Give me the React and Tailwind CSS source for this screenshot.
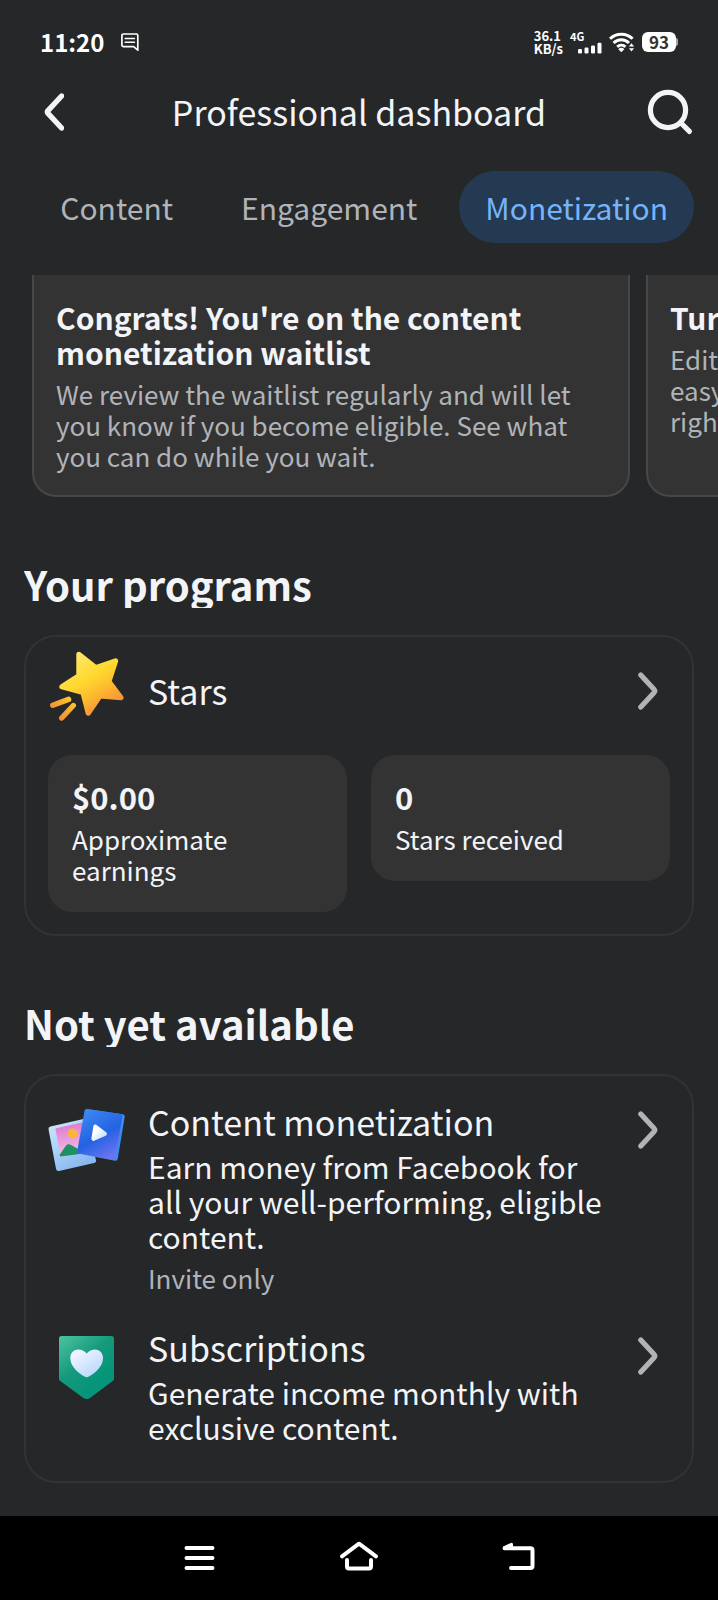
import React from 'react';

function MessageIcon() {
  return (
    <svg aria-hidden="true" className="size-5" viewBox="0 0 20 20" fill="none" stroke="#fff" strokeLinecap="round" strokeLinejoin="round">
      <path strokeWidth="1.7" d="M3.5 2h12.7c.9 0 1.6.7 1.6 1.6v14.6l-4.2-3.6H3.5c-.9 0-1.6-.7-1.6-1.6v-9.4C1.9 2.7 2.6 2 3.500 2z" />
      <path strokeWidth="1.6" d="M5.200 6.500h9.200M5.200 10.200h9.200" />
    </svg>
  );
}

function SignalIcon() {
  return (
    <svg aria-hidden="true" className="h-3 w-6" viewBox="0 0 24 12" fill="#fff">
      <rect x="0" y="7" width="4" height="4.500" rx="1.200" />
      <rect x="6.500" y="5.500" width="4" height="6" rx="1.200" />
      <rect x="13" y="3.500" width="4" height="8" rx="1.200" />
      <rect x="19.500" y="0.800" width="4" height="10.700" rx="1.200" />
    </svg>
  );
}

function WifiIcon() {
  return (
    <svg aria-hidden="true" className="h-5 w-[26px]" viewBox="0 0 26 20" fill="none" stroke="#fff" strokeWidth="3">
      <path d="M1 6.800a16 16 0 0 1 22.600 0" />
      <path d="M4.600 11a11 11 0 0 1 15.400 0" />
      <path d="M8.200 14.900a6 6 0 0 1 8.200 0" />
      <path fill="#fff" stroke="none" d="M9.300 17.200a4 4 0 0 1 6 0l-3 3z" />
      <path fill="#fff" stroke="none" d="M22.500 11.300l2.600 3.300h-5.200zM22.500 19.500l-2.600-3.300h5.200z" />
    </svg>
  );
}

function ChevronRight() {
  return (
    <svg aria-hidden="true" className="h-[38px] w-5 shrink-0" viewBox="0 0 20 38" fill="none" stroke="#b0b3b8" strokeWidth="5.200" strokeLinecap="round" strokeLinejoin="round">
      <path d="M2.800 3L16.200 17.600q1.200 1.400 0 2.800L2.800 35" />
    </svg>
  );
}

function StarIcon() {
  return (
    <svg aria-hidden="true" className="size-20 shrink-0" viewBox="0 0 80 80">
      <defs>
        <linearGradient id="star" x1="0.200" y1="0" x2="0.800" y2="1">
          <stop offset="0" stopColor="#ffe56b" />
          <stop offset="0.400" stopColor="#ffd930" />
          <stop offset="0.650" stopColor="#fdbb2d" />
          <stop offset="1" stopColor="#f5853f" />
        </linearGradient>
        <linearGradient id="trail" gradientUnits="userSpaceOnUse" x1="25" y1="48" x2="8" y2="66">
          <stop offset="0" stopColor="#ffca28" />
          <stop offset="1" stopColor="#f08838" />
        </linearGradient>
      </defs>
      <path
        d="M31 3.500L47.800 16.800L67.500 10L60.800 30.500L72.800 46.500L52 44.800L40.300 62L35 41.300L14 35.700L31 24.700z"
        fill="url(#star)" stroke="url(#star)" strokeWidth="5.400" strokeLinejoin="round"
      />
      <path d="M4.800 54.300L20.600 48.400M13.700 67L25.300 54.500" stroke="url(#trail)" strokeWidth="5.400" strokeLinecap="round" />
    </svg>
  );
}

function MediaIcon() {
  return (
    <svg aria-hidden="true" className="size-20 shrink-0" viewBox="0 0 80 80">
      <defs>
        <linearGradient id="frame" x1="0" y1="0" x2="0.600" y2="1">
          <stop offset="0" stopColor="#cfe6f8" />
          <stop offset="0.500" stopColor="#a9d2fa" />
          <stop offset="1" stopColor="#8ab8ef" />
        </linearGradient>
        <linearGradient id="sky" x1="0.300" y1="0" x2="0.500" y2="1">
          <stop offset="0" stopColor="#e07ad0" />
          <stop offset="1" stopColor="#f3c3e6" />
        </linearGradient>
        <linearGradient id="video" x1="0.200" y1="0" x2="0.700" y2="1">
          <stop offset="0" stopColor="#3b86f0" />
          <stop offset="0.550" stopColor="#2462e2" />
          <stop offset="1" stopColor="#6b74f0" />
        </linearGradient>
        <linearGradient id="play" x1="0" y1="0" x2="1" y2="1">
          <stop offset="0.300" stopColor="#fff" />
          <stop offset="1" stopColor="#bcdcfb" />
        </linearGradient>
      </defs>
      <path d="M3 26L36 18.500L45.500 57.500L10.500 65.500z" fill="url(#frame)" stroke="url(#frame)" strokeWidth="5" strokeLinejoin="round" />
      <path d="M8.500 26.200L34 20.500L41 47L13.500 53.200z" fill="url(#sky)" stroke="url(#sky)" strokeWidth="2" strokeLinejoin="round" />
      <circle cx="24.600" cy="30.500" r="5" fill="#fbb63a" />
      <path d="M13.200 52L19.300 43.400q1-1.200 2.600-.3L33 49.200z" fill="#1d9163" stroke="#1d9163" strokeWidth="3" strokeLinejoin="round" />
      <path d="M40 8.500L74.500 13.500L67.500 55.500L34 49z" fill="#3f8cf0" stroke="#3f8cf0" strokeWidth="4.500" strokeLinejoin="round" />
      <path d="M38.500 8L72.500 13L65 54.800L31.200 48.300z" fill="url(#video)" stroke="url(#video)" strokeWidth="4" strokeLinejoin="round" />
      <path d="M47.300 23.500L57 30.800L45.400 35.800z" fill="url(#play)" stroke="url(#play)" strokeWidth="4" strokeLinejoin="round" />
    </svg>
  );
}

function SubscriptionIcon() {
  return (
    <svg aria-hidden="true" className="size-20 shrink-0" viewBox="0 0 80 80">
      <defs>
        <linearGradient id="badge" x1="0" y1="0" x2="0.600" y2="0.800">
          <stop offset="0" stopColor="#4cc3a2" />
          <stop offset="0.600" stopColor="#15997b" />
          <stop offset="1" stopColor="#06957a" />
        </linearGradient>
        <linearGradient id="heart" x1="0" y1="0" x2="0.800" y2="1">
          <stop offset="0.200" stopColor="#eef3ff" />
          <stop offset="1" stopColor="#b4d6fa" />
        </linearGradient>
      </defs>
      <path d="M13.500 7h50a2.500 2.500 0 0 1 2.500 2.500V49.500q0 1.600-1.300 2.600L42 69q-3.300 2.200-6.600 0L12.300 52.100q-1.300-1-1.300-2.600V9.500A2.500 2.500 0 0 1 13.500 7z" fill="url(#badge)" />
      <path d="M38.700 24.600C41 21.500 44 20.500 47 20.500c5 0 8 3.700 8 8.500 0 8.500-7.500 14.500-14 18.600q-2.300 1.400-4.600 0C30 43.500 22.300 37.500 22.300 29c0-4.800 3-8.500 8-8.500 3 0 6.100 1 8.400 4.100z" fill="url(#heart)" />
    </svg>
  );
}

function TabButton({ active, children }) {
  return (
    <button
      type="button"
      role="tab"
      aria-selected={active}
      className={
        active
          ? 'h-[72px] rounded-full bg-[#243a52] px-[26px] text-[30px] text-[#75b4fb]'
          : 'h-[72px] rounded-full px-[26px] text-[30px] text-[#b0b3b8]'
      }
    >
      {children}
    </button>
  );
}

function PromoCard({ title, children }) {
  return (
    <article className="w-[calc(100vw-120px)] shrink-0 rounded-b-3xl border-2 border-t-0 border-[#464748] bg-[#333334] px-[22px] pt-[25px] pb-6">
      <h3 className="text-[30px] leading-[35px] font-bold">{title}</h3>
      <p className="mt-2 text-[26px] leading-[31px] text-[#b0b3b8]">{children}</p>
    </article>
  );
}

function Stat({ value, label }) {
  return (
    <div className="flex-1 rounded-3xl bg-[#333334] px-6 pt-6 pb-[27px]">
      <p className="text-[31px] leading-9 font-bold">{value}</p>
      <p className="mt-2 text-[26px] leading-[31px]">{label}</p>
    </div>
  );
}

function Program({ icon, title, text, note }) {
  return (
    <a href="#" className="flex items-start">
      {icon}
      <div className="ml-5 flex-1">
        <h3 className="text-[34px] leading-[38px]">{title}</h3>
        <p className="mt-2 text-[30px] leading-[35px]">{text}</p>
        {note && <p className="mt-2 text-[26px] leading-[31px] text-[#b0b3b8]">{note}</p>}
      </div>
      <div className="mt-2 mr-3 ml-8">
        <ChevronRight />
      </div>
    </a>
  );
}

function SectionTitle({ children }) {
  return <h2 className="mt-[63px] mb-[27px] overflow-hidden text-[40px] leading-[48px] font-bold">{children}</h2>;
}

export default function App() {
  return (
    <div className="flex min-h-screen flex-col overflow-x-hidden bg-[#252728] font-['Noto_Sans_CJK_SC','Noto_Sans',sans-serif] text-[#f2f4f7]">
      <div className="flex h-[84px] items-center justify-between pr-10 pl-10 text-white">
        <div className="flex items-center gap-4">
          <span className="text-[24px] leading-8 font-bold">11:20</span>
          <MessageIcon />
        </div>
        <div className="flex items-center gap-[7px]">
          <div className="text-[13px] leading-[13px] font-bold">
            <p>36.1</p>
            <p>KB/s</p>
          </div>
          <div className="flex flex-col">
            <span className="text-[11px] leading-3 font-bold">4G</span>
            <div className="pl-2">
              <SignalIcon />
            </div>
          </div>
          <WifiIcon />
          <div className="flex items-center">
            <span className="flex h-5 w-[34px] items-center justify-center rounded-md bg-white text-[17px] leading-5 font-bold text-[#333334]">93</span>
            <span className="h-2 w-[2px] rounded-r bg-[#a5a6a8]" />
          </div>
        </div>
      </div>

      <header className="grid h-[56px] grid-cols-[1fr_auto_1fr] items-center px-6">
        <button type="button" aria-label="Back" className="justify-self-start pl-5">
          <svg aria-hidden="true" className="h-[38px] w-5" viewBox="0 0 20 38" fill="none" stroke="#f2f4f7" strokeWidth="5.400" strokeLinecap="round" strokeLinejoin="round">
            <path d="M17.600 3L4 17.600q-1.200 1.400 0 2.800L17.600 35" />
          </svg>
        </button>
        <h1 className="text-[34px] leading-[48px]">Professional dashboard</h1>
        <button type="button" aria-label="Search" className="justify-self-end">
          <svg aria-hidden="true" className="size-12" viewBox="0 0 48 48" fill="none" stroke="#f2f4f7" strokeWidth="5.200" strokeLinecap="round">
            <circle cx="22" cy="22" r="17.600" />
            <path d="M35 35l8.400 8.400" />
          </svg>
        </button>
      </header>

      <div role="tablist" className="flex justify-end gap-4 px-6 pt-[31px] pb-8">
        <TabButton>Content</TabButton>
        <TabButton>Engagement</TabButton>
        <TabButton active>Monetization</TabButton>
      </div>

      <main className="flex-1">
        <div className="flex gap-4 overflow-hidden pl-8">
          <PromoCard title="Congrats! You're on the content monetization waitlist">
            We review the waitlist regularly and will let you know if you become eligible. See what you can do while you wait.
          </PromoCard>
          <PromoCard title="Turn ideas into videos">
            Edits makes it
            <br />
            easy to create
            <br />
            right here.
          </PromoCard>
        </div>

        <div className="px-6 pb-8">
          <SectionTitle>Your programs</SectionTitle>
          <section className="rounded-[32px] border-2 border-[#313334] px-[22px] pb-[22px]">
            <a href="#" className="flex h-[108px] items-center">
              <StarIcon />
              <h3 className="ml-5 flex-1 text-[34px] leading-[38px]">Stars</h3>
              <div className="mr-3">
                <ChevronRight />
              </div>
            </a>
            <div className="mt-[10px] flex items-start gap-6">
              <Stat value="$0.00" label="Approximate earnings" />
              <Stat value="0" label="Stars received" />
            </div>
          </section>

          <SectionTitle>Not yet available</SectionTitle>
          <section className="flex flex-col gap-9 rounded-[32px] border-2 border-[#313334] px-[22px] pt-[27px] pb-9">
            <Program
              icon={<MediaIcon />}
              title="Content monetization"
              text="Earn money from Facebook for all your well-performing, eligible content."
              note="Invite only"
            />
            <Program
              icon={<SubscriptionIcon />}
              title="Subscriptions"
              text="Generate income monthly with exclusive content."
            />
          </section>
        </div>
      </main>

      <nav className="flex h-[84px] items-center justify-center gap-28 bg-black">
        <button type="button" aria-label="Recent apps">
          <svg aria-hidden="true" className="size-12" viewBox="0 0 48 48" fill="none" stroke="#fff" strokeWidth="4" strokeLinecap="round">
            <path d="M11.500 14h26M11.500 24h26M11.500 34h26" />
          </svg>
        </button>
        <button type="button" aria-label="Home">
          <svg aria-hidden="true" className="size-12" viewBox="0 0 48 48" fill="none" stroke="#fff" strokeWidth="4" strokeLinecap="round" strokeLinejoin="round">
            <path d="M7 22.300L24 9.700L41 22.300" />
            <path d="M12 26v6.500q0 2 2 2h20q2 0 2-2V26" />
          </svg>
        </button>
        <button type="button" aria-label="Go back">
          <svg aria-hidden="true" className="size-12" viewBox="0 0 48 48" fill="none" stroke="#fff" strokeWidth="4" strokeLinecap="round" strokeLinejoin="round">
            <path d="M9.500 14.300H35.500q2 0 2 2V32q0 2-2 2H16" />
            <path fill="#fff" strokeWidth="3" d="M9.500 13.500L16.500 10.300v3z" />
          </svg>
        </button>
      </nav>
    </div>
  );
}
